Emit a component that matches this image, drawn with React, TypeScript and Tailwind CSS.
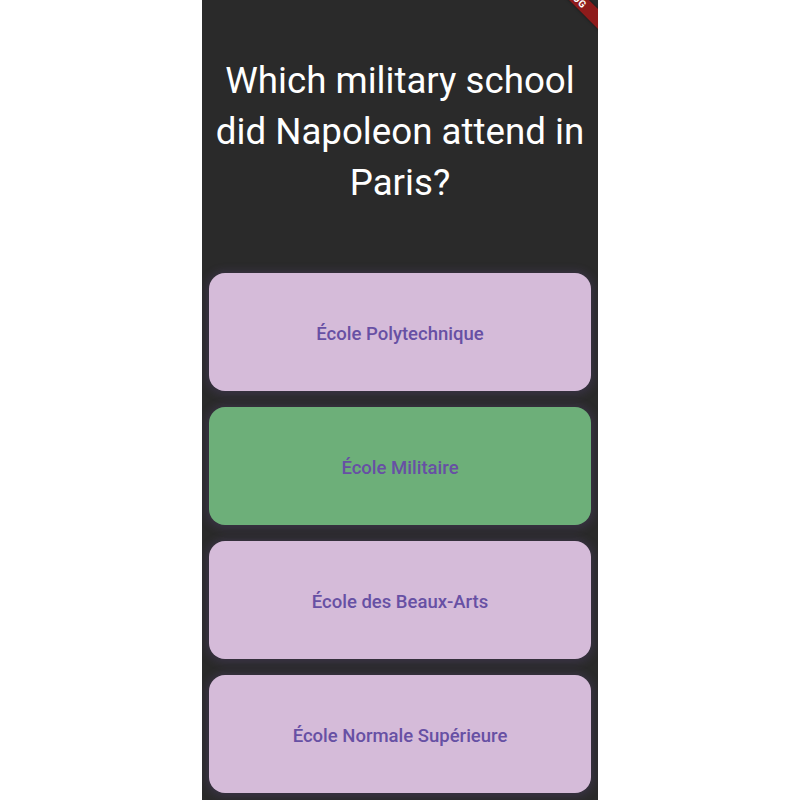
import React from "react";

const answers = [
  { label: "École Polytechnique", correct: false },
  { label: "École Militaire", correct: true },
  { label: "École des Beaux-Arts", correct: false },
  { label: "École Normale Supérieure", correct: false },
];

export default function App() {
  return (
    <div className="w-full h-[800px] bg-white flex justify-center" style={{ fontFamily: "Roboto, 'Noto Sans', sans-serif" }}>
      <div className="relative w-[396px] h-[800px] bg-[#2a2a2a] overflow-hidden flex flex-col">
        <div className="pt-[55px] px-2 text-center text-white text-[36.7px] leading-[51px] font-normal">
          Which military school did Napoleon attend in Paris?
        </div>
        <div className="mt-[65px] px-[7px] flex flex-col gap-4">
          {answers.map((a) => (
            <div
              key={a.label}
              className={`h-[118px] pt-[5px] rounded-[16px] flex items-center justify-center shadow-[0_1px_8px_3px_rgba(110,80,160,0.22)] ${
                a.correct ? "bg-[#6daf79]" : "bg-[#d5bbd9]"
              }`}
            >
              <span className="text-[18.5px] font-medium text-[#6750a4]">{a.label}</span>
            </div>
          ))}
        </div>
        <div
          className="absolute left-[321px] top-[-13px] w-[100px] h-[14px] bg-[#8e1b1b] rotate-45 flex items-center justify-center text-white text-[10px] font-bold tracking-[0.5px] shadow-[0_0_3px_rgba(0,0,0,0.5)]"
        >
          DEBUG
        </div>
      </div>
    </div>
  );
}
